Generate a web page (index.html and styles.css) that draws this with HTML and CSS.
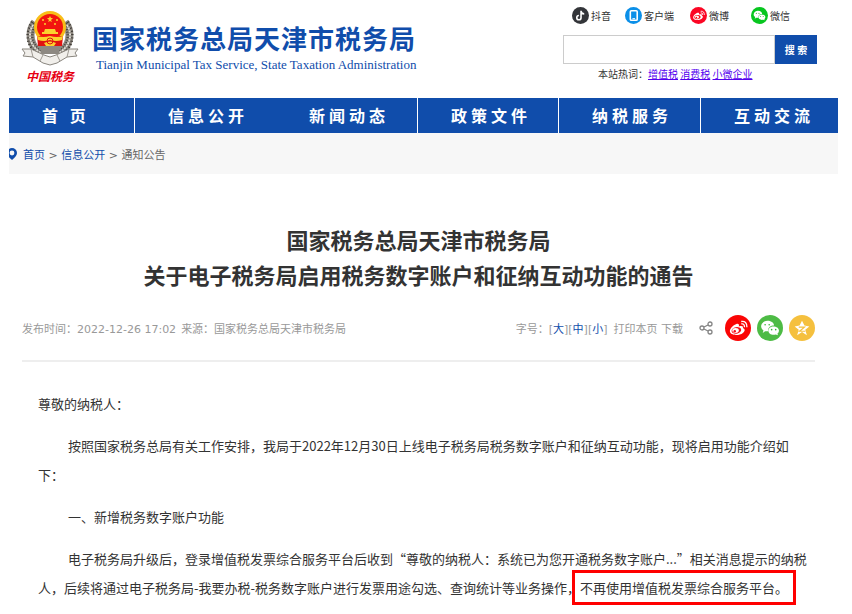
FILE: index.html
```html
<!DOCTYPE html>
<html lang="zh-CN">
<head>
  <meta charset="UTF-8">
  <meta name="viewport" content="width=device-width, initial-scale=1.0">
  <title>国家税务总局天津市税务局</title>
  <link rel="stylesheet" href="styles.css">
</head>
<body>
  <div class="page">
    <header class="header">
      <div class="brand">
        <div class="emblem">
          <svg width="58" height="56" viewBox="0 0 58 56" aria-hidden="true">
            <!-- wheat ears -->
            <g fill="none" stroke="#8b867e" stroke-width="8">
              <path d="M14 11C6 22 9 36 21 43"/>
              <path d="M44 11C52 22 49 36 37 43"/>
            </g>
            <g fill="none" stroke="#3f3c38" stroke-width="7" stroke-dasharray="1 2">
              <path d="M13 12C6 23 8 36 20 43"/>
              <path d="M45 12C52 23 50 36 38 43"/>
            </g>
            <g fill="none" stroke="#e4e1da" stroke-width="2" stroke-dasharray="2 1">
              <path d="M12 14C6 24 9 35 20 42"/>
              <path d="M46 14C52 24 49 35 38 42"/>
            </g>
            <path d="M17 34h24l-4 9H21z" fill="#8d8982"/>
            <!-- ribbon -->
            <path d="M1 38l9 0 13 6 6 2 6-2 13-6 9 0-3 4 2 3-10 1-10 6-7 2-7-2-10-6-10-1 2-3z" fill="#f1efeb" stroke="#8a867f"/>
            <path d="M10 38l2 8M48 38l-2 8M22 44l-3 6M36 44l3 6" stroke="#9d9992" fill="none"/>
            <!-- national emblem -->
            <circle cx="29" cy="16" r="16" fill="#f8bd18"/>
            <path d="M16 25l1 10h24l1-10z" fill="#e01310"/>
            <circle cx="29" cy="16" r="13" fill="#f2140f"/>
            <path d="M29 5l1 2h2l-2 2 1 2-2-1-2 1 1-2-2-2h2z" fill="#fbd12e"/>
            <g fill="#fbd12e">
              <circle cx="22" cy="9" r="1"/><circle cx="36" cy="9" r="1"/>
              <circle cx="24" cy="13" r="1"/><circle cx="34" cy="13" r="1"/>
              <path d="M24 18h10l1 3h2v2H21v-2h2z"/>
              <path d="M16 25q6 2 13 0 7 2 13 0l-1 4q-6 2-12 0-6 2-12 0z"/>
              <path d="M23 32q6-3 12 0l-2 3h-8z"/>
            </g>
            <circle cx="29" cy="30" r="3" fill="none" stroke="#e01310"/>
          </svg>
          <span class="emblem-text">中国税务</span>
        </div>
        <div class="brand-names">
          <div class="brand-cn">国家税务总局天津市税务局</div>
          <div class="brand-en">Tianjin Municipal Tax Service, State Taxation Administration</div>
        </div>
      </div>

      <div class="tools">
        <div class="channels">
          <a href="#">
            <svg viewBox="0 0 32 32" aria-hidden="true"><circle cx="16" cy="16" r="16" fill="#333539"/><path d="M17 7v13a4 4 0 1 1-4-4M17 8q1 5 6 5" fill="none" stroke="#fff" stroke-width="3"/></svg>抖音</a>
          <a href="#">
            <svg viewBox="0 0 32 32" aria-hidden="true"><circle cx="16" cy="16" r="16" fill="#0b8fe8"/><rect x="10" y="7" width="13" height="18" rx="2" fill="none" stroke="#fff" stroke-width="3"/><path d="M14 22h5" stroke="#fff" stroke-width="2"/></svg>客户端</a>
          <a href="#">
            <svg viewBox="0 0 32 32" aria-hidden="true"><circle cx="16" cy="16" r="16" fill="#fb0624"/><use href="#weibo"/></svg>微博</a>
          <a href="#">
            <svg viewBox="0 0 32 32" aria-hidden="true"><circle cx="16" cy="16" r="16" fill="#07c61f"/><use href="#wechat"/></svg>微信</a>
        </div>
        <form class="search">
          <input type="text" aria-label="搜索">
          <button type="button">搜 索</button>
        </form>
        <div class="hot">本站热词：<a href="#">增值税</a> <a href="#">消费税</a> <a href="#">小微企业</a></div>
      </div>
    </header>

    <nav class="nav">
      <a href="#">首 页</a>
      <a href="#" class="open">信息公开</a>
      <a href="#">新闻动态</a>
      <a href="#">政策文件</a>
      <a href="#">纳税服务</a>
      <a href="#">互动交流</a>
    </nav>

    <div class="crumbs">
      <svg width="8" height="12" viewBox="0 0 8 12" aria-hidden="true"><path d="M-2 5a5 5 0 0 1 10 0q0 3-5 7-5-4-5-7z" fill="#104dab"/><circle cx="3" cy="5" r="2.4" fill="#f7f7f7"/></svg>
      <div><a href="#">首页</a> &gt; <a href="#">信息公开</a> &gt; 通知公告</div>
    </div>

    <main class="article">
      <h1>国家税务总局天津市税务局<br>关于电子税务局启用税务数字账户和征纳互动功能的通告</h1>

      <div class="meta">
        <div class="source"><span>发布时间：2022-12-26 17:02</span><span>来源：国家税务总局天津市税务局</span></div>
        <div class="actions">
          <span>字号：[<a href="#">大</a>][<a href="#">中</a>][<a href="#">小</a>]</span>
          <span class="print">打印本页 下载</span>
          <svg class="share" width="14" height="14" viewBox="0 0 14 14" aria-hidden="true">
            <g fill="none" stroke="#858585" stroke-width="1.3"><circle cx="3" cy="7" r="2"/><circle cx="11" cy="3" r="2"/><circle cx="11" cy="11" r="2"/><path d="M5 6l4-2M5 8l4 2"/></g>
          </svg>
          <a class="round" href="#" aria-label="微博"><svg viewBox="0 0 32 32"><circle cx="16" cy="16" r="16" fill="#fa0505"/><use href="#weibo"/></svg></a>
          <a class="round" href="#" aria-label="微信"><svg viewBox="0 0 32 32"><circle cx="16" cy="16" r="16" fill="#4dbb45"/><use href="#wechat"/></svg></a>
          <a class="round" href="#" aria-label="收藏"><svg viewBox="0 0 32 32"><circle cx="16" cy="16" r="16" fill="#f5c03e"/><path d="M16 7l3 6 6 1-5 4 2 7-6-4-6 4 2-7-5-4 6-1z" fill="#fff"/><path d="M12 15h7l-6 5h7" fill="none" stroke="#f5c03e" stroke-width="1.5"/></svg></a>
        </div>
      </div>

      <div class="content">
        <p class="greeting">尊敬的纳税人：</p>
        <p>按照国家税务总局有关工作安排，我局于2022年12月30日上线电子税务局税务数字账户和征纳互动功能，现将启用功能介绍如下：</p>
        <p>一、新增税务数字账户功能</p>
        <p>电子税务局升级后，登录增值税发票综合服务平台后收到“尊敬的纳税人：系统已为您开通税务数字账户...”相关消息提示的纳税人，后续将通过电子税务局-我要办税-税务数字账户进行发票用途勾选、查询统计等业务操作，<span class="marked">不再使用增值税发票综合服务平台。</span></p>
      </div>
    </main>
  </div>

  <svg class="symbols" aria-hidden="true">
    <symbol id="weibo" viewBox="0 0 32 32">
      <path d="M14 11c2-1 4 0 3 3 4-1 6 0 5 2 3 1 3 4 0 6-5 4-16 3-16-2 0-4 5-8 8-9z" fill="#fff"/>
      <ellipse cx="14" cy="19" rx="6" ry="4" fill="#f80a14" transform="rotate(-10 14 19)"/>
      <ellipse cx="13" cy="19" rx="4" ry="3" fill="#fff"/>
      <circle cx="12" cy="20" r="1.5" fill="#f80a14"/>
      <path d="M20 11q4-1 4 4M20 8q7-1 7 7" fill="none" stroke="#fff" stroke-width="1.6"/>
    </symbol>
    <symbol id="wechat" viewBox="0 0 32 32">
      <path d="M13 7c5 0 8 3 8 6-5 0-8 3-7 7l-4 0-3 2 1-3c-6-4-2-12 5-12z" fill="#fff"/>
      <path d="M20 14c4 0 7 2 7 5 0 2-1 3-2 4l1 2-3-1c-5 1-9-1-9-5 0-3 3-5 6-5z" fill="#fff"/>
      <g fill="#36b936"><circle cx="10" cy="12" r="1"/><circle cx="15" cy="12" r="1"/><circle cx="18" cy="18" r="1"/><circle cx="23" cy="18" r="1"/></g>
    </symbol>
  </svg>
</body>
</html>
```

FILE: styles.css
```css
* {
  box-sizing: border-box;
}
body {
  margin: 0;
  background: #fff;
  color: #333;
  font-family: "Noto Sans CJK SC", "Noto Sans", sans-serif;
  font-size: 13px;
}
a {
  color: #104dab;
  text-decoration: none;
}
svg {
  display: block;
}
.symbols {
  display: none;
}
.page {
  margin: 0 14px 0 9px;
}

/* header */
.header {
  display: flex;
  justify-content: space-between;
  padding: 7px 21px 14px 12px;
}
.brand {
  display: flex;
  gap: 13px;
}
.emblem {
  padding-top: 4px;
}
.emblem-text {
  display: block;
  text-align: center;
  color: #e60012;
  font-size: 12px;
  line-height: 17px;
  font-weight: bold;
  font-style: italic;
}
.brand-names {
  padding-top: 13px;
  color: #104dab;
}
.brand-cn {
  font-size: 26px;
  line-height: 36px;
  font-weight: bold;
  letter-spacing: 1px;
}
.brand-en {
  padding-left: 4px;
  font-family: "Liberation Serif", serif;
  font-size: 13px;
  line-height: 18px;
}
.tools {
  width: 254px;
}
.channels {
  display: grid;
  grid-template-columns: 53px 65px 61px auto;
  padding-left: 9px;
}
.channels a {
  display: flex;
  align-items: center;
  gap: 2px;
  color: #333;
  font-size: 10px;
  line-height: 16px;
}
.channels svg {
  width: 17px;
  height: 17px;
}
.search {
  display: flex;
  margin-top: 11px;
}
.search input {
  flex: 1;
  min-width: 0;
  height: 29px;
  border: 1px solid #ccc;
  padding: 0 8px;
}
.search button {
  width: 42px;
  border: 0;
  padding: 0;
  background: #104dab;
  color: #fff;
  font-family: inherit;
  font-size: 10px;
  font-weight: bold;
}
.hot {
  padding-left: 35px;
  font-size: 10px;
  line-height: 20px;
}
.hot a {
  color: #50e;
  text-decoration: underline;
}

/* navigation */
.nav {
  display: grid;
  grid-template-columns: 126fr 141fr 142fr 141fr 142fr 137fr;
  background: #104dab;
}
.nav a {
  border-right: 1px solid #fff;
  padding-left: 33px;
  color: #fff;
  font-size: 16px;
  font-weight: bold;
  line-height: 35px;
  letter-spacing: 4px;
  white-space: nowrap;
}
.nav .open,
.nav a:last-child {
  border-right: 0;
}
.crumbs {
  display: flex;
  align-items: center;
  gap: 6px;
  height: 41px;
  background: #f7f7f7;
  color: #666;
  font-family: "DejaVu Sans", "Noto Sans CJK SC", sans-serif;
  font-size: 11px;
}

/* article */
.article {
  padding: 48px 23px 0 13px;
}
h1 {
  margin: 0;
  text-align: center;
  font-size: 22px;
  line-height: 35px;
}
.meta {
  display: flex;
  justify-content: space-between;
  align-items: center;
  margin-top: 4px;
  height: 66px;
  border-bottom: 2px solid #eee;
  color: #999;
  font-family: "DejaVu Sans", "Noto Sans CJK SC", sans-serif;
  font-size: 11px;
}
.source {
  display: flex;
  gap: 5px;
}
.actions {
  display: flex;
  align-items: center;
  gap: 6px;
}
.print {
  margin-right: 10px;
}
.share {
  margin-right: 6px;
}
.round svg {
  width: 26px;
  height: 26px;
}
.content {
  padding: 27px 3px 0 16px;
}
.content p {
  margin: 0 0 13px;
  line-height: 29px;
  text-indent: 30px;
}
.content .greeting {
  text-indent: 0;
}
.marked {
  outline: 3px solid #f00;
  outline-offset: 5px;
}
```
